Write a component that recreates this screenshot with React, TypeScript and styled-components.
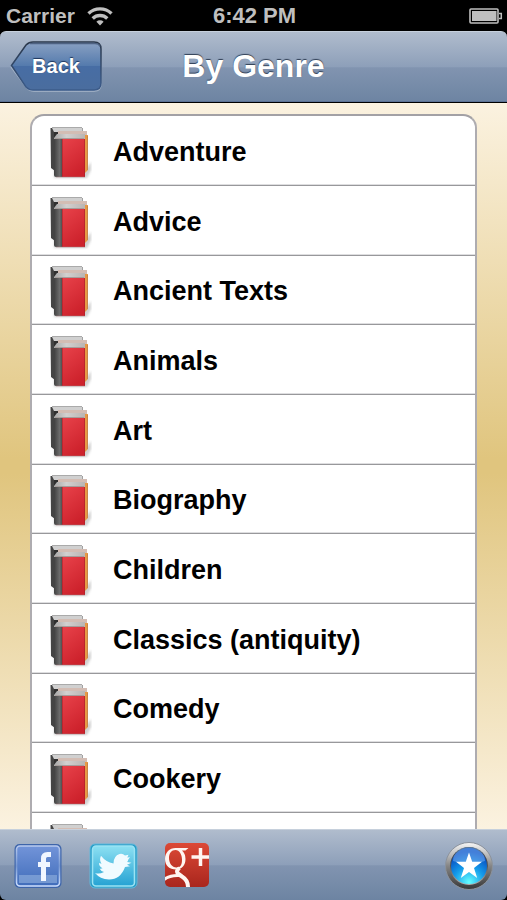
import React from "react";
import styled, { createGlobalStyle } from "styled-components";

const GlobalStyle = createGlobalStyle`
  * { box-sizing: border-box; }
  body {
    margin: 0;
    background: #000;
    font-family: "Liberation Sans", Arial, Helvetica, sans-serif;
    font-weight: 700;
  }
`;

const Screen = styled.div`
  display: flex;
  flex-direction: column;
  height: 100vh;
  overflow: hidden;
  background: #000;
`;

const StatusBar = styled.header`
  flex: none;
  display: grid;
  grid-template-columns: 1fr auto 1fr;
  align-items: center;
  height: 31px;
  padding: 0 4px 0 6px;
  color: #bfbfbf;
  font-size: 22px;
  line-height: 30px;
`;

const Signal = styled.div`
  display: flex;
  align-items: center;
  gap: 12px;
  font-size: 21px;
`;

const BatterySlot = styled.div`
  display: flex;
  justify-content: flex-end;
`;

const barFill = `linear-gradient(#b0bccd 0%, #8d9fb9 50%, #8194b0 51%, #6d84a2 100%)`;

const NavBar = styled.nav`
  flex: none;
  display: grid;
  grid-template-columns: 1fr auto 1fr;
  align-items: center;
  height: 72px;
  padding: 0 10px;
  border-top: 1px solid #c6d0dc;
  border-bottom: 1px solid #000;
  border-radius: 6px 6px 0 0;
  background: ${barFill};
  box-shadow: inset 0 -1px #5c7295;
`;

const BackButton = styled.button`
  display: grid;
  justify-self: start;
  align-items: center;
  width: 92px;
  height: 52px;
  padding: 0;
  border: 0;
  background: none;
  color: #fff;
  font: inherit;
  font-size: 20px;
  line-height: 24px;
  text-shadow: 0 -1px 1px #1d355b;
  cursor: pointer;
  & > * { grid-area: 1 / 1; }
`;

const BackLabel = styled.span`
  padding-bottom: 2px;
  text-align: center;
`;

const Title = styled.h1`
  margin: 0;
  padding-bottom: 2px;
  color: #fff;
  font-size: 32px;
  line-height: 40px;
  text-shadow: 0 -1px 1px #2f3e54;
`;

const Content = styled.main`
  flex: 1;
  min-height: 0;
  overflow: hidden;
  padding: 11px 30px 0;
  background: linear-gradient(#fbf2e0 0%, #e0c57e 49%, #e0c57e 51%, #fbf2e0 100%);
`;

const GenreList = styled.ul`
  margin: 0;
  padding: 0;
  list-style: none;
  border: 2px solid #aeacb0;
  border-top-color: #a3a1a5;
  border-radius: 14px;
  background: #fff;
`;

const GenreRow = styled.li`
  height: 70px;
  border-bottom: 1px solid #98989b;
  box-shadow: inset 0 -1px #dedee0;
  &:nth-child(3n) { height: 69px; }
  &:last-child { border-bottom: 0; box-shadow: none; }
`;

const GenreLink = styled.a`
  display: flex;
  align-items: center;
  gap: 21px;
  height: 100%;
  padding: 4px 17px 0;
  color: #000;
  font-size: 27px;
  line-height: 32px;
  text-decoration: none;
  & > span { padding-bottom: 2px; }
`;

const Toolbar = styled.footer`
  flex: none;
  display: flex;
  align-items: center;
  gap: 26px;
  height: 71px;
  padding: 2px 13px 0;
  border-top: 1px solid #c6d0dc;
  border-radius: 0 0 6px 6px;
  background: ${barFill};
`;

const ToolButton = styled.button<{ $end?: boolean }>`
  display: flex;
  margin-left: ${(p) => (p.$end ? "auto" : "0")};
  padding: 0;
  border: 0;
  background: none;
  cursor: pointer;
`;

const genres = [
  "Adventure", "Advice", "Ancient Texts", "Animals", "Art", "Biography",
  "Children", "Classics (antiquity)", "Comedy", "Cookery",
];

const WifiIcon = () => (
  <svg width="26" height="20" viewBox="0 0 26 20" fill="none" stroke="#bfbfbf" strokeWidth="3.4" aria-hidden="true">
    <path d="M1.5 7.500a16.500 16.500 0 0 1 23 0" />
    <path d="M5.700 12.500a10.500 10.500 0 0 1 14.600 0" />
    <path d="M13 19.500l-3.600-3.800a5.200 5.200 0 0 1 7.200 0z" fill="#bfbfbf" stroke="none" />
  </svg>
);

const BatteryIcon = () => (
  <svg width="34" height="16" viewBox="0 0 34 16" role="img" aria-label="Battery full">
    <rect x="1" y="1" width="28" height="14" rx="1" fill="none" stroke="#bfbfbf" strokeWidth="1.6" />
    <rect x="3" y="3" width="24.5" height="10" fill="#bfbfbf" />
    <path d="M30 5.5h2.3v5H30" fill="none" stroke="#bfbfbf" strokeWidth="1.5" />
  </svg>
);

const BackShape = () => (
  <svg width="92" height="52" viewBox="0 0 92 52" aria-hidden="true">
    <defs>
      <linearGradient id="back" x2="0" y2="1">
        <stop offset="0" stopColor="#8aa1c3" />
        <stop offset=".49" stopColor="#557bad" />
        <stop offset=".51" stopColor="#476da4" />
        <stop offset="1" stopColor="#4a6d9e" />
      </linearGradient>
      <linearGradient id="backEdge" x2="0" y2="1">
        <stop offset="0" stopColor="#293649" />
        <stop offset="1" stopColor="#3c5c8b" />
      </linearGradient>
    </defs>
    <path d="M1.500 26.500L17 6q3-3 7-3h60q7 0 7 7v33q0 7-7 7H24q-4 0-7-3z" fill="none" stroke="#a9b7ca" strokeWidth="1.500" />
    <path d="M1.500 24.500L16 4q3-3 7-3h61q7 0 7 7v34q0 7-7 7H23q-4 0-7-3z" fill="url(#back)" stroke="url(#backEdge)" strokeWidth="1.500" />
    <path d="M20 2.500h65q4 0 5 3" fill="none" stroke="#4e6282" strokeWidth="1.500" />
  </svg>
);

const BookIcon = () => (
  <svg width="43" height="54" viewBox="0 0 43 54" aria-hidden="true">
    <defs>
      <linearGradient id="cover" x2=".5" y2="1">
        <stop offset="0" stopColor="#e8424a" />
        <stop offset="1" stopColor="#cd222c" />
      </linearGradient>
      <linearGradient id="spine">
        <stop offset="0" stopColor="#404040" />
        <stop offset=".7" stopColor="#6c6c6c" />
        <stop offset="1" stopColor="#505050" />
      </linearGradient>
      <linearGradient id="pages">
        <stop offset="0" stopColor="#a8a8a8" />
        <stop offset=".4" stopColor="#d2d0cf" />
        <stop offset="1" stopColor="#bab5b3" />
      </linearGradient>
      <filter id="soft" x="-20%" y="-10%" width="140%" height="120%">
        <feGaussianBlur stdDeviation="1.2" />
      </filter>
    </defs>
    <path d="M0 43h5v9h33l4-8v-8l-6 9z" fill="#999" opacity=".45" filter="url(#soft)" />
    <path d="M1.500 2h32v5H6v38l-4-3z" fill="#444" />
    <path d="M3 2h30v4H5z" fill="#d0d0d0" />
    <path d="M3 1.500h30" stroke="#aaa" />
    <path d="M5 6h4v38H5z" fill="#303030" />
    <path d="M9 5h29v5H9z" fill="#d3bdb4" />
    <path d="M34 9h5v35l-4 4z" fill="#e79a45" />
    <path d="M38.500 10v34" stroke="#c98548" />
    <path d="M5 12l3-4h28v5H5z" fill="url(#pages)" />
    <path d="M6 12.500h29" stroke="#a59c9a" />
    <path d="M5 13h8v38H7q-2 0-2-2z" fill="url(#spine)" />
    <path d="M13 13h23v38H13z" fill="url(#cover)" />
    <path d="M13.500 13v38M35.500 13v38" stroke="#a31d25" opacity=".5" />
    <path d="M7 51h29" stroke="#a4767a" opacity=".5" />
  </svg>
);

const FacebookIcon = () => (
  <svg width="50" height="48" viewBox="0 0 50 48" aria-hidden="true">
    <defs>
      <linearGradient id="fb" x2="0" y2="1">
        <stop offset="0" stopColor="#7294d9" />
        <stop offset="1" stopColor="#416dba" />
      </linearGradient>
      <linearGradient id="edge" x2="0" y2="1">
        <stop offset="0" stopColor="#b9cbef" />
        <stop offset=".5" stopColor="#7899d2" />
        <stop offset="1" stopColor="#cfe0ff" />
      </linearGradient>
    </defs>
    <rect x="1.500" y="2" width="47" height="44" rx="5" fill="#3e65aa" />
    <rect x="3.500" y="4" width="43" height="40" rx="3.500" fill="url(#fb)" stroke="url(#edge)" strokeWidth="1.600" />
    <path d="M6 33h38v8H6z" fill="#89a9da" opacity=".7" />
    <path d="M38 12.500h-3.500q-4 0-4 4V39M25 22.500h12" fill="none" stroke="#f1f6ff" strokeWidth="5" />
  </svg>
);

const TwitterIcon = () => (
  <svg width="50" height="48" viewBox="0 0 50 48" aria-hidden="true">
    <defs>
      <linearGradient id="tw" x2="0" y2="1">
        <stop offset="0" stopColor="#8ce0f2" />
        <stop offset="1" stopColor="#25a2d3" />
      </linearGradient>
    </defs>
    <rect x="1" y="2" width="47" height="44" rx="5" fill="#259bc6" stroke="#62b8da" />
    <rect x="3.500" y="4" width="42" height="40" rx="3.500" fill="url(#tw)" stroke="#9be3f3" strokeWidth="1.600" />
    <path d="M6 31q4 1.500 9-1-3-.5-4.500-3.500 1.500.5 3-.3-3.500-1.700-3.500-5.200l2.500.8q-2.500-3.800-.5-8 5 6.500 12.500 7.700 0-7.500 6-9.500 3-1 5.500 1.500l3.500-.8-1.200 2.800 2.700-.3-1.700 2.300q-.3 1.500-1.200 2.500l4.400.7-4.500 2 3 1.500-5 .8Q31.500 37.500 20 37.500q-9-.5-14-6.500z" fill="#f0fbff" />
  </svg>
);

const GooglePlusIcon = () => (
  <svg width="45" height="48" viewBox="0 0 45 48" aria-hidden="true">
    <defs>
      <linearGradient id="gp" x2="0" y2="1">
        <stop offset="0" stopColor="#dc4936" />
        <stop offset="1" stopColor="#a9261d" />
      </linearGradient>
      <clipPath id="gpClip"><rect y="1" width="44" height="44" rx="5" /></clipPath>
    </defs>
    <g clipPath="url(#gpClip)">
      <rect y="1" width="44" height="44" fill="url(#gp)" />
      <path fillRule="evenodd" fill="#fff5f1" d="M10.500 6h13l-3 2.500h-3.500q3.500 3 3.500 8.500c0 6-3.500 10.500-9.500 10.500C4.500 27.500 0 23.500 0 17 0 10.500 4.500 6 10.500 6zm0 2C6.500 8 4 11 4 16s3 9.500 7.500 9.500S17 22 17 17.500 14.500 8 10.500 8z" />
      <g fill="none" stroke="#fff5f1">
        <path d="M14.500 26q-4 3-1.500 5.500 1 1 4 3Q23.500 38.500 23 46" strokeWidth="4" />
        <path d="M-1 37.500q6-4.500 15-4" strokeWidth="3" />
        <path d="M35.500 6v18M26.500 15H44" strokeWidth="3.500" />
      </g>
    </g>
  </svg>
);

const StarIcon = () => (
  <svg width="50" height="50" viewBox="0 0 50 50" aria-hidden="true">
    <defs>
      <linearGradient id="ring" x2="0" y2="1">
        <stop offset="0" stopColor="#f8f8f8" />
        <stop offset=".5" stopColor="#858585" />
        <stop offset="1" stopColor="#363636" />
      </linearGradient>
      <linearGradient id="ringInner" x2="0" y2="1">
        <stop offset="0" stopColor="#26364e" />
        <stop offset=".5" stopColor="#555" />
        <stop offset="1" stopColor="#b2b2b2" />
      </linearGradient>
      <radialGradient id="orb" cx=".5" cy=".95" r=".85">
        <stop offset="0" stopColor="#64ffff" />
        <stop offset=".5" stopColor="#149bea" />
        <stop offset="1" stopColor="#0745bd" />
      </radialGradient>
    </defs>
    <circle cx="25" cy="25" r="23.500" fill="url(#ring)" stroke="#8b929c" />
    <circle cx="25" cy="25" r="19" fill="url(#ringInner)" />
    <circle cx="25" cy="25" r="18" fill="url(#orb)" />
    <path d="M9 20a16 14 0 0 1 32 0q-16 6-32 0z" fill="#8fc5fa" opacity=".45" />
    <path d="M25 11.500l3.200 9.300H38l-8 6.300 3.200 10-8.200-6-8.200 6 3.200-10-8-6.300h9.800z" fill="#fff" />
  </svg>
);

export default function App() {
  return (
    <>
      <GlobalStyle />
      <Screen>
        <StatusBar>
          <Signal>Carrier<WifiIcon /></Signal>
          <span>6:42 PM</span>
          <BatterySlot><BatteryIcon /></BatterySlot>
        </StatusBar>
        <NavBar>
          <BackButton type="button"><BackShape /><BackLabel>Back</BackLabel></BackButton>
          <Title>By Genre</Title>
        </NavBar>
        <Content>
          <GenreList>
            {genres.map((genre) => (
              <GenreRow key={genre}>
                <GenreLink href="#"><BookIcon /><span>{genre}</span></GenreLink>
              </GenreRow>
            ))}
            <GenreRow>
              <GenreLink href="#" aria-label="More genres"><BookIcon /></GenreLink>
            </GenreRow>
          </GenreList>
        </Content>
        <Toolbar>
          <ToolButton type="button" aria-label="Share on Facebook"><FacebookIcon /></ToolButton>
          <ToolButton type="button" aria-label="Share on Twitter"><TwitterIcon /></ToolButton>
          <ToolButton type="button" aria-label="Share on Google Plus"><GooglePlusIcon /></ToolButton>
          <ToolButton type="button" aria-label="Favorites" $end><StarIcon /></ToolButton>
        </Toolbar>
      </Screen>
    </>
  );
}
